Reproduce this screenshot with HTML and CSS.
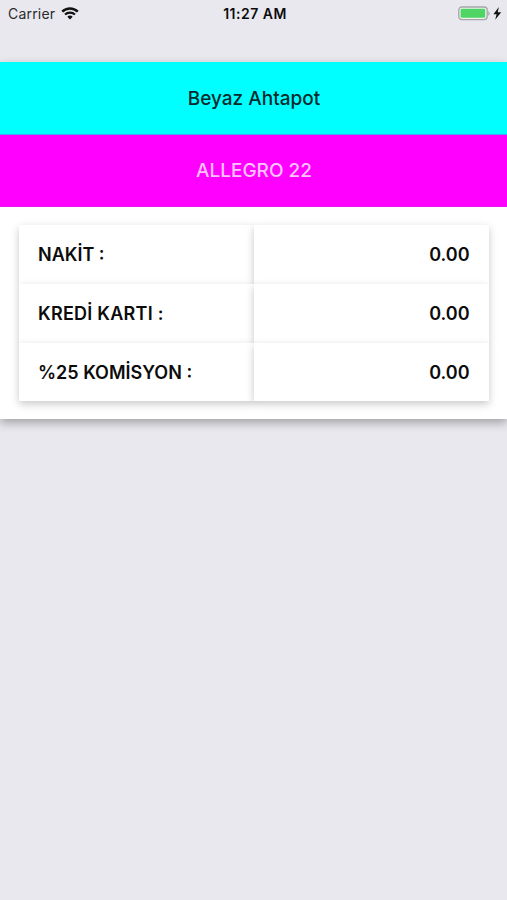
FILE: index.html
```html
<!DOCTYPE html>
<html lang="tr">
<head>
  <meta charset="UTF-8">
  <meta name="viewport" content="width=device-width, initial-scale=1.0">
  <title>Beyaz Ahtapot</title>
  <link rel="stylesheet" href="styles.css">
</head>
<body>

  <header class="status-bar">
    <div class="status-left">
      <span class="carrier">Carrier</span>
      <svg class="wifi" width="18" height="13" viewBox="0 0 18 13">
        <path d="M1.2 4.6a11.2 11.2 0 0 1 15.6 0" fill="none" stroke="#111" stroke-width="2.5"/>
        <path d="M4 7.6a7.2 7.2 0 0 1 10 0" fill="none" stroke="#111" stroke-width="2.1"/>
        <path d="M6.3 9.8a4 4 0 0 1 5.4 0L9 12.5z" fill="#111"/>
      </svg>
    </div>
    <span class="clock">11:27 AM</span>
    <div class="status-right">
      <svg width="44" height="16" viewBox="0 0 44 16">
        <rect x="0.8" y="1" width="28.4" height="12.6" rx="3" fill="#eef3ee" stroke="#a3a5a6" stroke-width="1.3"/>
        <rect x="2.6" y="2.8" width="24.6" height="9" rx="1.4" fill="#4fd564"/>
        <path d="M30.3 5c1.8.7 1.8 4.1 0 4.8z" fill="#a3a5a6"/>
        <path d="M40.9 1.1L35.4 8.2h3.2l-1.4 5.6 6-7.6h-3.5z" fill="#111"/>
      </svg>
    </div>
  </header>

  <main class="card">
    <h1 class="banner banner-company">Beyaz Ahtapot</h1>
    <h2 class="banner banner-boat">ALLEGRO 22</h2>

    <div class="totals">
      <div class="cell label">NAKİT :</div>
      <div class="cell value">0.00</div>
      <div class="cell label label-wide">KREDİ KARTI :</div>
      <div class="cell value">0.00</div>
      <div class="cell label">%25 KOMİSYON :</div>
      <div class="cell value">0.00</div>
    </div>
  </main>

</body>
</html>
```

FILE: styles.css
```css
* {
  box-sizing: border-box;
}

body {
  font-family: Inter, "Liberation Sans", sans-serif;
  margin: 0;
  min-height: 100vh;
  background-color: #e9e8ee;
  color: #0c0c0c;
  overflow-x: hidden;
}

/* Status bar */
.status-bar {
  display: grid;
  grid-template-columns: 1fr auto 1fr;
  align-items: center;
  height: 27px;
  padding: 0 5px 0 8px;
  margin-bottom: 35px;
  font-size: 14px;
}

.status-left {
  display: flex;
  align-items: center;
  gap: 6px;
}

.carrier {
  color: #2b2b2e;
  letter-spacing: 0.2px;
}

.wifi {
  margin-bottom: 1px;
}

.clock {
  font-weight: 600;
  letter-spacing: 0.5px;
}

.status-right {
  display: flex;
  justify-content: flex-end;
}

/* Card */
.card {
  height: 357px;
  background-color: #fff;
  box-shadow: 0 4px 9px rgba(0, 0, 0, 0.3);
}

.banner {
  display: flex;
  align-items: center;
  justify-content: center;
  margin: 0;
  padding-left: 1px;
  font-size: 19px;
}

.banner-company {
  height: 73px;
  padding-top: 1px;
  background-color: #00ffff;
  border-bottom: 1px solid #4f9ff0;
  color: #062a2c;
  font-weight: 500;
}

.banner-boat {
  height: 72px;
  background-color: #ff00ff;
  border-bottom: 1px solid #ea18ea;
  color: #ffc4ff;
  font-weight: 500;
}

/* Totals table */
.totals {
  display: grid;
  grid-template-columns: 1fr 1fr;
  grid-auto-rows: 58.8px;
  margin: 18px 18.5px 0 19px;
}

.cell {
  display: flex;
  align-items: center;
  padding: 1px 19px 0;
  background-color: #fff;
  box-shadow: 0 3px 8px rgba(0, 0, 0, 0.22);
  font-size: 18px;
  font-weight: 600;
}

.label-wide {
  letter-spacing: 0.25px;
}

.value {
  justify-content: flex-end;
}
```
